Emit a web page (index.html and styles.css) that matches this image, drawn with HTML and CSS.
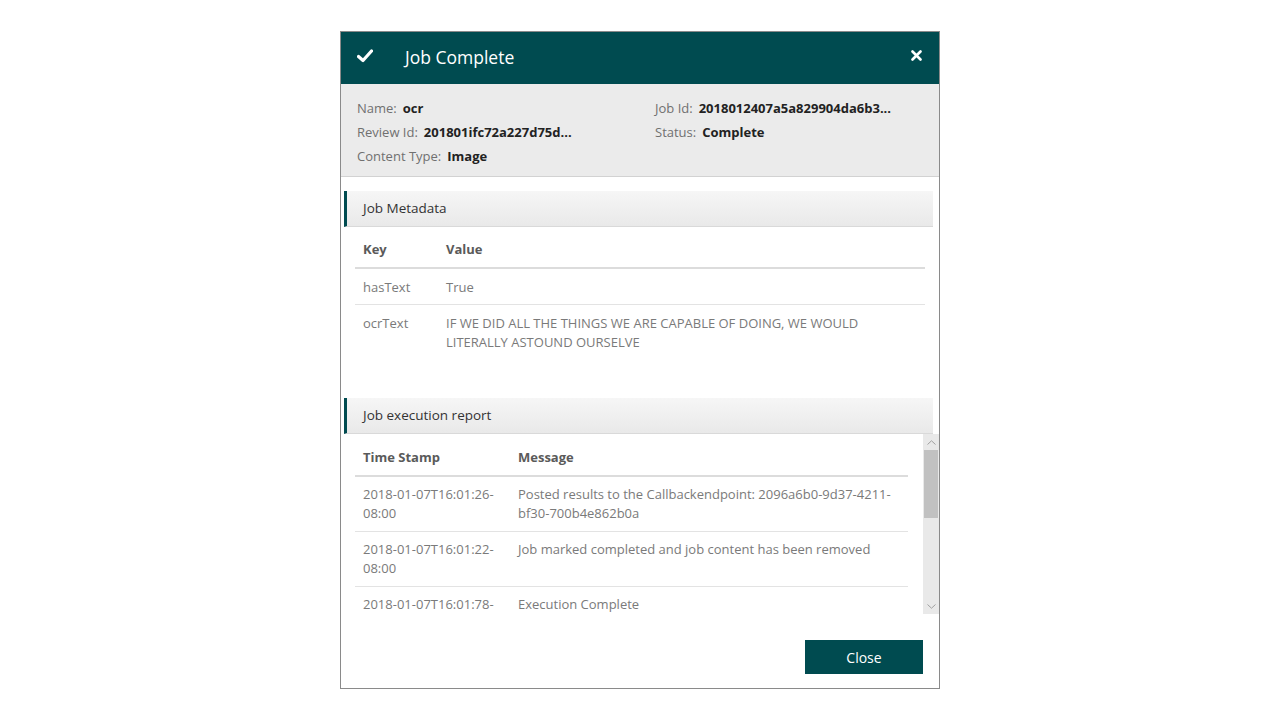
FILE: index.html
```html
<!DOCTYPE html>
<html>
<head>
<meta charset="utf-8">
<title>Job Complete</title>
<link rel="stylesheet" href="styles.css">
</head>
<body>
<div class="dialog">
  <div class="dlg-header">
    <svg class="check" width="16" height="14" viewBox="0 0 16 14"><path d="M1.5 7.5 L6 11.5 L14.5 2" fill="none" stroke="#fff" stroke-width="3.2" stroke-linecap="round" stroke-linejoin="round"/></svg>
    <span class="title">Job Complete</span>
    <svg class="close-x" width="11" height="11" viewBox="0 0 11 11"><path d="M1.5 1.5 L9.5 9.5 M9.5 1.5 L1.5 9.5" fill="none" stroke="#fff" stroke-width="2.6" stroke-linecap="round"/></svg>
  </div>
  <div class="info">
    <div class="info-col">
      <div class="info-row"><span class="lbl">Name:</span><span class="val">ocr</span></div>
      <div class="info-row"><span class="lbl">Review Id:</span><span class="val">201801ifc72a227d75d...</span></div>
      <div class="info-row"><span class="lbl">Content Type:</span><span class="val">Image</span></div>
    </div>
    <div class="info-col">
      <div class="info-row"><span class="lbl">Job Id:</span><span class="val">2018012407a5a829904da6b3...</span></div>
      <div class="info-row"><span class="lbl">Status:</span><span class="val">Complete</span></div>
    </div>
  </div>

  <div class="section">
    <div class="section-bar">Job Metadata</div>
    <table class="grid meta">
      <thead><tr><th class="c-key">Key</th><th>Value</th></tr></thead>
      <tbody>
        <tr><td class="c-key">hasText</td><td>True</td></tr>
        <tr><td class="c-key">ocrText</td><td>IF WE DID ALL THE THINGS WE ARE CAPABLE OF DOING, WE WOULD LITERALLY ASTOUND OURSELVE</td></tr>
      </tbody>
    </table>
  </div>

  <div class="section section-exec">
    <div class="section-bar">Job execution report</div>
    <div class="scroll-wrap">
      <div class="scroll-content">
        <table class="grid exec">
          <thead><tr><th class="c-time">Time Stamp</th><th>Message</th></tr></thead>
          <tbody>
            <tr><td class="c-time">2018-01-07T16:01:26-08:00</td><td>Posted results to the Callbackendpoint: 2096a6b0-9d37-4211-bf30-700b4e862b0a</td></tr>
            <tr><td class="c-time">2018-01-07T16:01:22-08:00</td><td>Job marked completed and job content has been removed</td></tr>
            <tr><td class="c-time">2018-01-07T16:01:78-08:00</td><td>Execution Complete</td></tr>
          </tbody>
        </table>
      </div>
      <div class="scrollbar">
        <div class="sb-btn"><svg width="9" height="5" viewBox="0 0 9 5"><path d="M0.5 4.5 L4.5 0.8 L8.5 4.5" fill="none" stroke="#a0a0a0" stroke-width="1"/></svg></div>
        <div class="sb-track"><div class="sb-thumb"></div></div>
        <div class="sb-btn"><svg width="9" height="5" viewBox="0 0 9 5"><path d="M0.5 0.5 L4.5 4.2 L8.5 0.5" fill="none" stroke="#a0a0a0" stroke-width="1"/></svg></div>
      </div>
    </div>
  </div>

  <div class="footer">
    <button class="btn-close">Close</button>
  </div>
</div>
</body>
</html>
```

FILE: styles.css
```css
* { box-sizing: border-box; }
html, body { margin: 0; padding: 0; background: #fff; }
body {
  font-family: "Segoe UI", "Open Sans", "Noto Sans", sans-serif;
  font-size: 13px;
  color: #333;
}
.dialog {
  width: 600px;
  height: 658px;
  margin: 31px auto 0;
  border: 1px solid #8a8a8a;
  background: #fff;
  display: flex;
  flex-direction: column;
}
.dlg-header {
  height: 52px;
  background: #004b50;
  display: flex;
  align-items: center;
  padding: 0 17px 0 16px;
  color: #fff;
  flex-shrink: 0;
}
.check { margin-bottom: 4px; }
.title {
  margin-left: 32px;
  font-size: 17.5px;
  flex: 1;
  margin-bottom: 2px;
}
.close-x { margin-bottom: 5px; }
.info {
  background: #ebebeb;
  border-bottom: 1px solid #d2d2d2;
  padding: 12px 16px 8px;
  display: grid;
  grid-template-columns: 298px 1fr;
  flex-shrink: 0;
}
.info-row {
  height: 24px;
  line-height: 24px;
  white-space: nowrap;
}
.lbl { color: #707070; margin-right: 6px; }
.val { color: #222; font-weight: 700; }

.section { margin-top: 14px; }
.section-exec { margin-top: 39px; }
.section-bar {
  margin: 0 6px 0 3px;
  height: 36px;
  line-height: 35px;
  border-left: 3px solid #004b50;
  border-bottom: 1px solid #d9d9d9;
  background: linear-gradient(#f6f6f6, #e9e9e9);
  padding-left: 16px;
  font-size: 13.5px;
  color: #333;
}
.grid {
  border-collapse: collapse;
  table-layout: fixed;
  width: 100%;
}
.grid th {
  text-align: left;
  font-weight: 700;
  color: #5a5a5a;
  padding: 13px 8px 8px;
  line-height: 19px;
  border-bottom: 2px solid #dcdcdc;
}
.exec th { padding-top: 14px; }
.grid td {
  color: #7a7a7a;
  padding: 9px 8px 7px;
  line-height: 19px;
  vertical-align: top;
  border-bottom: 1px solid #e3e3e3;
}
.exec td { padding: 8px 8px 8px; }
.grid tbody tr:last-child td { border-bottom: none; }
.meta {
  margin: 0 14px 0 14px;
  width: calc(100% - 28px);
}
.meta .c-key { width: 83px; }
.scroll-wrap {
  display: flex;
  height: 180px;
}
.scroll-content {
  flex: 1;
  overflow: hidden;
  padding: 0 15px 0 14px;
}
.exec .c-time { width: 155px; }
.scrollbar {
  width: 16px;
  display: flex;
  flex-direction: column;
  background: #e9e9e9;
}
.sb-btn {
  height: 16px;
  display: flex;
  align-items: center;
  justify-content: center;
}
.sb-track { flex: 1; }
.sb-thumb {
  margin: 0 1px;
  height: 68px;
  background: #c1c1c1;
}
.footer {
  margin-top: auto;
  padding: 0 16px 14px 0;
  display: flex;
  justify-content: flex-end;
}
.btn-close {
  width: 118px;
  height: 34px;
  background: #004b50;
  border: none;
  color: #fff;
  font-family: inherit;
  font-size: 14px;
  cursor: pointer;
}
```
